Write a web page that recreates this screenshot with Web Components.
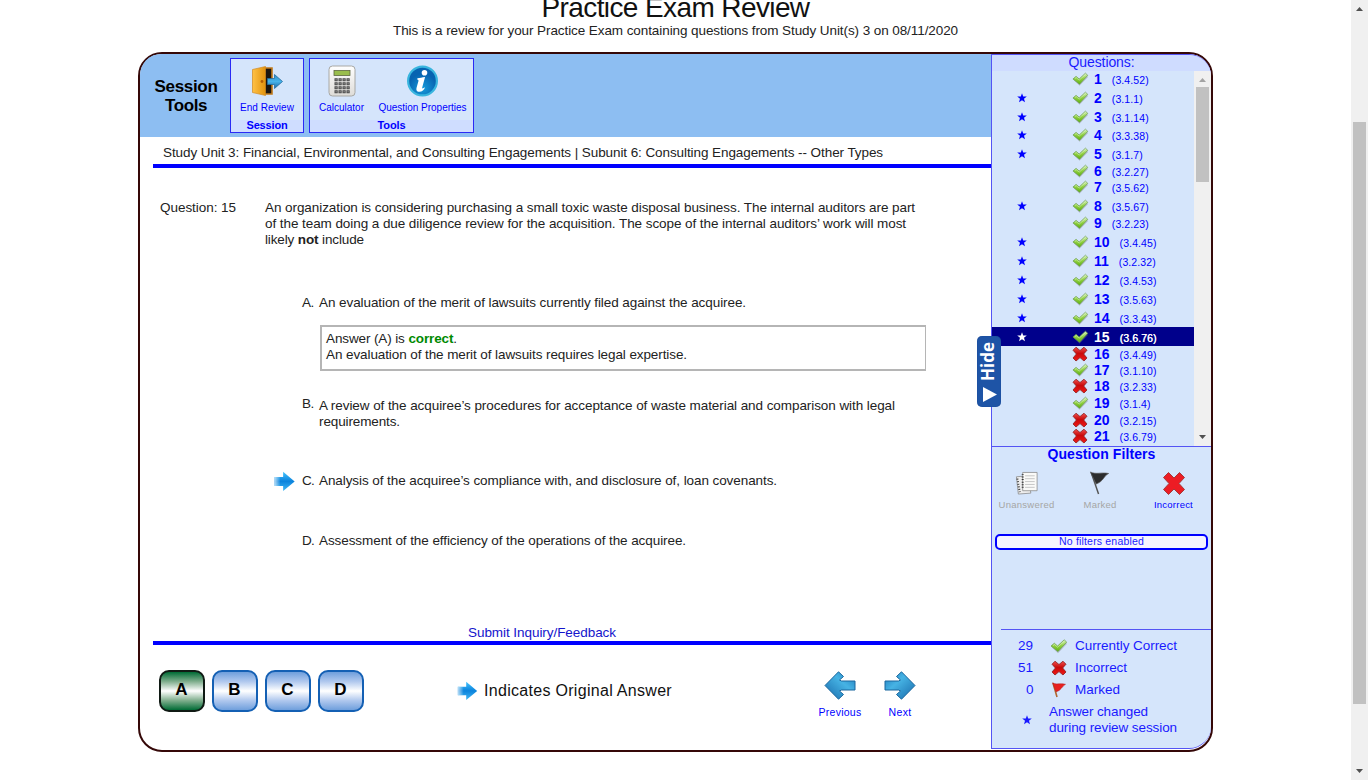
<!DOCTYPE html>
<html lang="en">
<head>
<meta charset="utf-8">
<title>Practice Exam Review</title>
<style>
html,body{margin:0;height:780px;overflow:hidden;background:#fff;font-family:"Liberation Sans",Arial,sans-serif;font-size:13.500px;color:#222}
</style>
</head>
<body>
<exam-page></exam-page>
<script>
const define = (name, html, setup) => customElements.define(name, class extends HTMLElement {
  constructor() {
    super();
    this.attachShadow({ mode: 'open' });
  }
  connectedCallback() {
    this.shadowRoot.innerHTML = typeof html === 'function' ? html(this) : html;
    if (setup) setup(this);
  }
});

const arrow = '<path d="M1 9h13V1l17 14.500-17 14V22H1z"';
const art = {
  check: ['0 0 18 16', `<defs><linearGradient id="g" x2="0" y2="1"><stop stop-color="#d8f0c0"/><stop offset=".5" stop-color="#8fd040"/><stop offset="1" stop-color="#5fb010"/></linearGradient></defs><path d="M2 8.600 5 6l3 2.700L14.600 3l2.400 2-9 9.400z" fill="#777" opacity=".35" transform="translate(0 .8)"/><path d="M1 8 4.300 5.200 7.600 8 14.200 1.800 16.700 4.100 8 13.600z" fill="url(#g)" stroke="#67994a" stroke-width=".7"/><path d="m3 7.500 1.500-.9 3.100 2.600 6.600-5.900" fill="none" stroke="#e8fbd5" stroke-width=".7" opacity=".7"/>`],
  cross: ['0 0 16 16', `<defs><linearGradient id="g" x2="0" y2="1"><stop stop-color="#f05050"/><stop offset=".45" stop-color="#c90a0a"/><stop offset="1" stop-color="#f01818"/></linearGradient></defs><path d="m1 4.200 3-3 4 3.300 4-3.300 3 3L11.700 8l3.300 4-3 3-4-3.400L4 15l-3-3 3.400-4z" fill="url(#g)" stroke="#8c2020" stroke-width=".8" stroke-linejoin="round"/>`],
  bigcross: ['0 0 24 24', `<path d="m1.500 6 5-5 5.500 5.500L17.500 1l5 5-5.500 6 5.500 6-5 5-5.500-5.500L6.500 23l-5-5L7 12z" fill="#ed1c24" stroke="#a43a3a" stroke-linejoin="round"/>`],
  star: ['0 0 10 10', `<path d="M5 .3 6.200 3.600H9.800L7 5.800 8 9.300 5 7.200 2 9.300 3 5.800.2 3.600h3.600z" fill="currentColor"/>`],
  arrow: ['0 0 32 31', `<defs><linearGradient id="g" x2="0" y2="1"><stop stop-color="#45c5ff"/><stop offset=".5" stop-color="#0b83dc"/><stop offset="1" stop-color="#41b8f5"/></linearGradient><linearGradient id="h"><stop stop-color="#fff" stop-opacity=".7"/><stop offset=".3" stop-color="#fff" stop-opacity="0"/></linearGradient></defs>${arrow} fill="url(#g)"/>${arrow} fill="url(#h)"/>`],
  next: ['0 0 32 29', `<defs><linearGradient id="g" x2="1" y2="1"><stop stop-color="#1c78ba"/><stop offset=".4" stop-color="#46b3e4"/><stop offset="1" stop-color="#1769aa"/></linearGradient></defs><path d="M1 10h13.500l2-1-4-3.500L17.500.8 31 14.500 17.500 28.200l-5-4.700 4-3.500-2-1H1z" fill="url(#g)" stroke="#1b679e" stroke-linejoin="round"/>`],
  flag: ['0 0 16 16', `<path d="m2 1 4 14" stroke="#b06830" stroke-width="1.600"/><path d="M1.600.8C5 3 8 1 14.500 2.300 11 4 10 9 5 9.800z" fill="#e82020" stroke="#b02020" stroke-width=".5"/>`],
  darkflag: ['0 0 24 26', `<path d="m3 2 7.500 22" stroke="#555" stroke-width="1.500"/><path d="M2 1c6 3 11 0 19 1.600-5 2-5 8-13 11z" fill="#2c2c2c" stroke="#555" stroke-width=".7"/>`],
  pages: ['0 0 24 26', `<g stroke="#888" stroke-width=".8"><path d="m1 6 12-1 3 18-13 1z" fill="#eee"/><path d="M7.500 1.500h15v19h-15z" fill="#fafaf8"/></g><path d="M10 5h10M10 8h10M10 11h10M10 14h10M10 17h10" stroke="#c5c5c5"/><path d="M7.500 3v16M2 8l2.500 14" stroke="#333" stroke-width="2" stroke-dasharray="1 1.700"/>`],
  door: ['0 0 32 32', `<defs><linearGradient id="g" x2="1"><stop stop-color="#ffc146"/><stop offset="1" stop-color="#e2930e"/></linearGradient><linearGradient id="h" x2="0" y2="1"><stop stop-color="#2a8cc8"/><stop offset=".5" stop-color="#48b3ea"/><stop offset="1" stop-color="#1765a5"/></linearGradient></defs><path d="M13 3h8v26h-8z" fill="#1c1610" stroke="#c07a1c" stroke-width="1.600"/><path d="m1.500 4.500 13-3v29l-13-3z" fill="url(#g)" stroke="#d18a20" stroke-width=".7"/><circle cx="11" cy="16.500" r="1.400" fill="#b25d05"/><path d="M16.500 13.500H23.500v-4l8 7-8 7v-4h-7z" fill="url(#h)" stroke="#246d9f" stroke-width=".8"/>`],
  calc: ['0 0 28 32', `<defs><linearGradient id="g" x2="0" y2="1"><stop stop-color="#fff"/><stop offset="1" stop-color="#dedcd8"/></linearGradient></defs><rect x="1" y="1" width="26" height="30" rx="3.500" fill="url(#g)" stroke="#a8a8a4"/><rect x="6" y="5.500" width="16" height="5" fill="#99bd4c" stroke="#5d673f" stroke-width=".8"/><path d="M6.500 14.800h16M6.500 18.800h16M6.500 22.800h16M6.500 26.800h16" stroke="#484848" stroke-width="3" stroke-dasharray="3.200 .8"/><path d="M7.500 14.800h14M7.500 18.800h14M7.500 22.800h14M7.500 26.800h14" stroke="#aaa" stroke-width="1" stroke-dasharray="1.200 2.800"/>`],
  info: ['0 0 32 32', `<defs><radialGradient id="g" cy=".75"><stop stop-color="#169bda"/><stop offset="1" stop-color="#0763b1"/></radialGradient></defs><circle cx="16" cy="16" r="14.400" fill="url(#g)" stroke="#39b5de" stroke-width="2.200"/><circle cx="18" cy="7.800" r="2.800" fill="#fff"/><path d="M11 13.300c2.500 0 4.500-.8 7.600-1.200l-2.900 10.400c-.3 1.400.6 1.300 2.900-.5-.7 3-3.200 4.800-5.700 4.800-3 0-3.400-2-2.700-4.500l1.700-6c.3-1.200-.2-1.700-1.400-1.700z" fill="#fff"/>`]
};
const icon = (n, w, h, extra = '') => `<pic-icon name="${n}" w="${w}" h="${h}" ${extra}></pic-icon>`;

define('exam-page', `<style>
:host{display:flex;height:780px;overflow:hidden}
main{flex:1;display:flex;flex-direction:column;align-items:center;overflow:hidden}
h1{margin:-8px 0 0;height:31px;line-height:31px;font-weight:400;font-size:28px;color:#111}
p{margin:0;line-height:16px;height:29px}
</style><main><h1><fit-line w="269">Practice Exam Review</fit-line></h1>
<p><fit-line w="566">This is a review for your Practice Exam containing questions from Study Unit(s) 3 on 08/11/2020</fit-line></p>
<exam-frame></exam-frame></main><scroll-bar w="17" top="122" thumb="582"></scroll-bar>`);

define('scroll-bar', e => `<style>
:host{display:flex;flex-direction:column;justify-content:space-between;width:${e.getAttribute('w')}px;background:#f0f0f0;position:relative;flex:none}
svg{width:17px;height:17px}i{position:absolute;left:2px;right:2px;top:${e.getAttribute('top')}px;height:${e.getAttribute('thumb')}px;background:#c1c1c1}
</style><svg><path d="m5 11 3.500-4 3.500 4z" fill="${e.getAttribute('up') || '#505050'}"/></svg><i></i><svg><path d="m5 6 3.500 4 3.500-4z" fill="#505050"/></svg>`);

define('exam-frame', `<style>
:host{display:flex;box-sizing:border-box;width:1075px;height:700px;border:2px solid #350808;border-radius:24px;position:relative;background:#fff}
section{width:851px;display:flex;flex-direction:column}
hide-tab{position:absolute;left:837px;top:282px}
</style><section><tool-bar></tool-bar><question-body></question-body><answer-bar></answer-bar></section><side-panel></side-panel><hide-tab></hide-tab>`);

define('hide-tab', `<style>
:host{width:24px;height:71px;background:#1e54a6;border-radius:5px;display:flex;flex-direction:column;align-items:center;color:#fff;box-shadow:inset 0 0 1px #0d3984}
b{writing-mode:vertical-rl;transform:rotate(180deg);font:bold 17px/22px "Open Sans",sans-serif;height:45px;margin:3px 2px 0 0;text-align:center}
svg{width:15px;height:16px;margin-top:3px}
</style><b>Hide</b><svg><path d="M1 0v15l14-7.500z" fill="#fff"/></svg>`);

define('tool-bar', `<style>
:host{display:flex;height:83px;background:#8dbef2;border-radius:21px 0 0 0;box-sizing:border-box;padding-top:3.500px}
h2{margin:19px 0 0;width:90px;padding-left:0;font-size:17px;line-height:19px;text-align:center;color:#000}
h2 fit-line{margin-left:2px}
tool-group+tool-group{margin-left:5px}
</style><h2><fit-line w="64">Session</fit-line><br><fit-line w="43">Tools</fit-line></h2>
<tool-group name="Session" w="74" nw="42"><tool-item icon="door" iw="32" label="End Review" lw="55" w="72"></tool-item></tool-group>
<tool-group name="Tools" w="165" nw="29"><tool-item icon="calc" iw="28" label="Calculator" lw="46" w="63"></tool-item><tool-item icon="info" iw="33" label="Question Properties" lw="89" w="99"></tool-item></tool-group>`);

define('tool-group', e => `<style>
:host{display:block;box-sizing:border-box;width:${e.getAttribute('w')}px;height:75.500px;border:1px solid #2a2af5;background:#d5e5fb;color:#00f;flex:none}
div{display:flex;height:61px}b{display:block;height:12.500px;line-height:11px;background:#cfddff;text-align:center;font-size:11px}
</style><div><slot></slot></div><b><fit-line w="${e.getAttribute('nw')}">${e.getAttribute('name')}</fit-line></b>`);

define('tool-item', e => `<style>
:host{display:flex;flex-direction:column;align-items:center;width:${e.getAttribute('w')}px;padding-top:6.500px;box-sizing:border-box;font-size:10px;line-height:12px}
fit-line{margin-top:5px}
</style>${icon(e.getAttribute('icon'), e.getAttribute('iw'), 32)}<fit-line w="${e.getAttribute('lw')}">${e.getAttribute('label')}</fit-line>`);

define('question-body', `<style>
:host{display:block;height:507px;line-height:16px;box-sizing:border-box;padding-left:13px}
header{height:27px;box-sizing:border-box;padding:8px 0 0 10px}
hr{margin:0;border:0;height:4px;background:#00f}
.q{display:grid;grid-template-columns:105px 1fr;padding:32px 0 0 7px;height:95px;box-sizing:border-box}
fit-line{display:table}
.why{box-sizing:border-box;margin-left:167px;width:606px;height:46px;border:solid #b5b5b5;border-width:2px 1px 2px 2px;padding:4px 0 0 4px}
.why b{color:#008a00}
footer{height:18px;padding:1px 0 0 315px;box-sizing:border-box;color:#1414cc;line-height:17px}
</style>
<header><fit-line w="721">Study Unit 3: Financial, Environmental, and Consulting Engagements | Subunit 6: Consulting Engagements -- Other Types</fit-line></header><hr>
<div class="q"><fit-line w="77">Question: 15</fit-line><div><fit-line w="651">An organization is considering purchasing a small toxic waste disposal business. The internal auditors are part</fit-line><fit-line w="642">of the team doing a due diligence review for the acquisition. The scope of the internal auditors’ work will most</fit-line><fit-line w="100">likely <b>not</b> include</fit-line></div></div>
<answer-choice letter="A" top="32" h="62"><fit-line w="428">An evaluation of the merit of lawsuits currently filed against the acquiree.</fit-line></answer-choice>
<div class="why"><fit-line w="132">Answer (A) is <b>correct</b>.</fit-line><fit-line w="362">An evaluation of the merit of lawsuits requires legal expertise.</fit-line></div>
<answer-choice letter="B" top="25" h="102" drop="2"><fit-line w="577">A review of the acquiree’s procedures for acceptance of waste material and comparison with legal</fit-line><fit-line w="82">requirements.</fit-line></answer-choice>
<answer-choice letter="C" top="0" h="60" original><fit-line w="459">Analysis of the acquiree’s compliance with, and disclosure of, loan covenants.</fit-line></answer-choice>
<answer-choice letter="D" top="0" h="90"><fit-line w="368">Assessment of the efficiency of the operations of the acquiree.</fit-line></answer-choice>
<footer><fit-line w="149">Submit Inquiry/Feedback</fit-line></footer><hr>`);

define('answer-choice', e => `<style>
:host{display:grid;grid-template-columns:29px 17px 1fr;padding:${e.getAttribute('top')}px 0 0 120px;height:${e.getAttribute('h')}px;box-sizing:border-box;line-height:16px}
pic-icon{margin-top:-2px}div{padding-top:${e.getAttribute('drop') || 0}px}::slotted(fit-line){display:table}
fit-line{display:table}
</style><span>${e.hasAttribute('original') ? icon('arrow', 23, 21) : ''}</span><fit-line w="13">${e.getAttribute('letter')}.</fit-line><div><slot></slot></div>`);

define('answer-bar', `<style>
:host{display:flex;padding:26px 0 0 19px;height:82px;box-sizing:border-box;align-items:flex-start}
letter-button{margin-right:7px}
.key{display:flex;align-items:center;height:42px;margin-left:85px;width:354px;font-size:16px;color:#111;gap:5px}
nav{display:flex;font-size:10.500px;color:#00f;line-height:12px;margin-top:1px}
nav div{width:60px;display:flex;flex-direction:column;align-items:center;gap:6px}
.flip{transform:scaleX(-1)}
</style><letter-button on>A</letter-button><letter-button>B</letter-button><letter-button>C</letter-button><letter-button>D</letter-button>
<div class="key">${icon('arrow', 23, 20)}<fit-line w="189">Indicates Original Answer</fit-line></div>
<nav><div>${icon('next', 32, 29, 'class="flip"')}<fit-line w="44">Previous</fit-line></div><div>${icon('next', 32, 29)}<fit-line w="24">Next</fit-line></div></nav>`);

define('letter-button', e => `<style>
:host{box-sizing:border-box;width:46px;height:42px;border-radius:10px;border:2px solid ${e.hasAttribute('on') ? '#101a14' : '#1460b4'};display:grid;place-items:center;color:#000;font:bold 17px/20px "Liberation Sans",sans-serif;padding:0 1px 2px 0;
background:linear-gradient(${e.hasAttribute('on') ? '#006b35,#7fae8d 25%,#fff 50%,#7fae8d 75%,#006b35' : '#6f9fdc,#b0c8ee 25%,#fff 50%,#b0c8ee 75%,#6f9fdc'})}
</style><slot></slot>`);

const rows = [
[1,'3.4.52',79,0,1],[2,'3.1.1',98,1,1],[3,'3.1.14',117,1,1],[4,'3.3.38',135,1,1],[5,'3.1.7',154,1,1],[6,'3.2.27',171,0,1],[7,'3.5.62',187,0,1],
[8,'3.5.67',206,1,1],[9,'3.2.23',223,0,1],[10,'3.4.45',242,1,1],[11,'3.2.32',261,1,1],[12,'3.4.53',280,1,1],[13,'3.5.63',299,1,1],[14,'3.3.43',318,1,1],
[15,'3.6.76',337,1,1],[16,'3.4.49',354,0,0],[17,'3.1.10',370,0,1],[18,'3.2.33',386,0,0],[19,'3.1.4',403,0,1],[20,'3.2.15',420,0,0],[21,'3.6.79',436,0,0]];

define('side-panel', `<style>
:host{display:flex;flex-direction:column;box-sizing:border-box;flex:1;background:#d5e5fb;border:1px solid #5454f4;border-right:0;border-radius:0 22px 22px 0;margin-bottom:1px;overflow:hidden;color:#1a1aff}
h3{margin:0;height:16px;line-height:15px;font-size:14px;font-weight:400;text-align:center;background:#cfdcff}
.list{display:flex;height:375px;border-bottom:1px solid #5454f4}
.rows{width:202px;overflow:hidden}
h4{margin:0;height:16px;line-height:15px;font-size:14px;text-align:center;color:#00f}
.filters{display:grid;grid-template-columns:69px 78px 69px;height:71px;padding-top:8px;box-sizing:border-box}
.none{box-sizing:border-box;height:16px;margin:0 3px;border:2px solid #00f;border-radius:5px;background:#f6f4ff;text-align:center;font-size:10.500px;line-height:11px}
.stats{margin:79px 0 0 9px;border-top:1px solid #5454f4;padding-top:5px;display:grid;grid-template-columns:32px 42px 1fr;grid-auto-rows:22px;align-items:center;line-height:16px}
.stats>:nth-child(3n+1){justify-self:end}
.stats pic-icon{justify-self:center;margin-left:10px}
.changed{display:flex;padding:3px 0 0 30px;align-items:center;gap:17px;line-height:16px}.changed fit-line{display:table}
pic-icon{flex:none}
</style><h3><fit-line w="67">Questions:</fit-line></h3>
<div class="list"><div class="rows">${rows.map(([n, id, c, s, ok], i) => `<question-row n="${n}" code="${id}" gap="${i ? c - rows[i - 1][2] - 16 : 0}" ${s ? 'star' : ''} ${ok ? 'ok' : ''} ${n === 15 ? 'current' : ''}></question-row>`).join('')}</div>
<scroll-bar w="17" top="16" thumb="95" up="#a3a3a3"></scroll-bar></div>
<h4><fit-line w="109">Question Filters</fit-line></h4>
<div class="filters"><filter-item icon="pages" off w="57">Unanswered</filter-item><filter-item icon="darkflag" off w="34">Marked</filter-item><filter-item icon="bigcross" w="40">Incorrect</filter-item></div>
<div class="none"><fit-line w="86">No filters enabled</fit-line></div>
<div class="stats"><fit-line w="16">29</fit-line>${icon('check', 18, 16)}<fit-line w="103">Currently Correct</fit-line>
<fit-line w="16">51</fit-line>${icon('cross', 16, 16)}<fit-line w="53">Incorrect</fit-line>
<fit-line w="8">0</fit-line>${icon('flag', 16, 16)}<fit-line w="46">Marked</fit-line></div>
<div class="changed">${icon('star', 10, 10)}<div><fit-line w="100">Answer changed</fit-line><fit-line w="129">during review session</fit-line></div></div>`);

define('question-row', e => `<style>
:host{display:grid;grid-template-columns:26px 54px 22px auto 1fr;grid-template-rows:16px;align-items:center;height:16px;margin-top:${e.getAttribute('gap')}px;color:${e.hasAttribute('current') ? '#fff' : '#00f'}}
:host([current]){background:#00008b;box-shadow:0 -2px #00008b,0 1px #00008b}
.c{font-size:10.500px;line-height:12px;margin:1px 0 0 10px}b{font-size:14px;line-height:16px;margin-top:-1px}
.i{grid-column:3}.s{grid-column:1/3;padding-left:25px}.s pic-icon{margin-top:-1px}
:host([current]) .c{text-shadow:.3px 0 #fff}
</style><span class="s">${e.hasAttribute('star') ? icon('star', 10, 10) : ''}</span><span class="i">${e.hasAttribute('ok') ? icon('check', 17, 16) : icon('cross', 16, 16)}</span><b>${e.getAttribute('n')}</b><fit-line class="c" w="${e.getAttribute('code').length > 5 ? 38 : 32}">(${e.getAttribute('code')})</fit-line>`);

define('filter-item', e => `<style>
:host{display:flex;flex-direction:column;align-items:center;font-size:9.500px;line-height:12px;gap:3px;color:${e.hasAttribute('off') ? '#a5a5a5' : '#00f'}}
</style>${icon(e.getAttribute('icon'), 24, 25)}<fit-line w="${e.getAttribute('w')}"><slot></slot></fit-line>`);

define('pic-icon', e => {
  const [box, body] = art[e.getAttribute('name')], w = e.getAttribute('w'), h = e.getAttribute('h');
  return `<style>:host{display:block;width:${w}px;height:${h}px}svg{display:block}</style><svg width="${w}" height="${h}" viewBox="${box}">${body}</svg>`;
});

// A single line of text whose tracking is adjusted to a set width.
define('fit-line', '<style>:host{display:inline-block;white-space:nowrap}span{display:inline-block}</style><span><slot></slot></span>', e => {
  const span = e.shadowRoot.querySelector('span');
  const inner = e.querySelector('slot');
  const text = inner ? inner.assignedNodes().map(n => n.textContent).join('') : e.textContent;
  const slack = e.getAttribute('w') - 1 - span.getBoundingClientRect().width;
  e.style.letterSpacing = slack / text.length + 'px';
});
</script>
</body>
</html>
